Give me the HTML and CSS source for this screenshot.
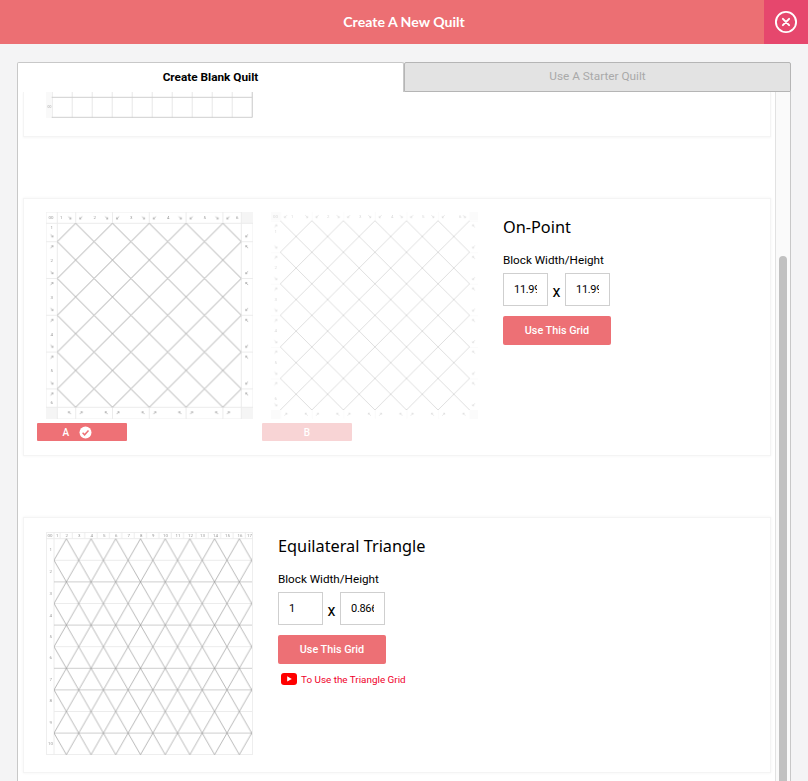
FILE: index.html
```html
<!DOCTYPE html>
<html lang="en">
<head>
<meta charset="utf-8">
<title>Create A New Quilt</title>
<link rel="stylesheet" href="styles.css">
</head>
<body>
<svg class="defs" width="0" height="0" aria-hidden="true">
  <defs>
    <pattern id="a-dia" x="11.3" y="11.3" width="36.8" height="36.8" patternUnits="userSpaceOnUse">
      <path class="ln" d="M18.4 0L0 18.4L18.4 36.8L36.8 18.4Z"/>
    </pattern>
    <pattern id="a-top" x="11.3" y="0" width="36.8" height="11.3" patternUnits="userSpaceOnUse">
      <path class="dv" d="M18.4 0V11.3"/>
      <path class="ar" d="M11.2 4.5l2.4 2.4m-1.5 0h1.5v-1.5M24.9 4.5l-2.4 2.4m1.5 0h-1.5v-1.5"/>
    </pattern>
    <pattern id="a-bot" x="11.3" y="195.3" width="36.8" height="11.7" patternUnits="userSpaceOnUse">
      <path class="dv" d="M18.4 0V11.7"/>
      <path class="ar" d="M13.6 6.9l-2.4-2.4m1.5 0h-1.5v1.5M22.5 6.9l2.4-2.4m-1.5 0h1.5v1.5"/>
    </pattern>
    <pattern id="a-left" x="0" y="11.3" width="11.3" height="36.8" patternUnits="userSpaceOnUse">
      <path class="dv" d="M0 18.4H11.3"/>
      <path class="ar" d="M4.5 11.2l2.4 2.4m-1.5 0h1.5v-1.5M4.5 24.9l2.4-2.4m-1.5 0h1.5v1.5"/>
    </pattern>
    <pattern id="a-right" x="195.3" y="11.3" width="11.7" height="36.8" patternUnits="userSpaceOnUse">
      <path class="dv" d="M0 18.4H11.7"/>
      <path class="ar" d="M6.9 11.2l-2.4 2.4m1.5 0h-1.5v-1.5M6.9 24.9l-2.4-2.4m1.5 0h-1.5v1.5"/>
    </pattern>
    <pattern id="b-dia" x="9.3" y="8.7" width="31.55" height="31.55" patternUnits="userSpaceOnUse">
      <path class="ln" d="M0 0L31.55 31.55M31.55 0L0 31.55"/>
    </pattern>
    <pattern id="b-top" x="9.3" y="0" width="31.55" height="8.7" patternUnits="userSpaceOnUse">
      <path class="dv" d="M0 0V8.7"/>
      <path class="ar" d="M25 3.2l2.4 2.4m-1.5 0h1.5v-1.5M6.6 3.2l-2.4 2.4m1.5 0h-1.5v-1.5"/>
    </pattern>
    <pattern id="b-bot" x="9.3" y="198" width="31.55" height="8.7" patternUnits="userSpaceOnUse">
      <path class="dv" d="M0 0V8.7"/>
      <path class="ar" d="M27.4 5.6l-2.4-2.4m1.5 0h-1.5v1.5M4.2 5.6l2.4-2.4m-1.5 0h1.5v1.5"/>
    </pattern>
    <pattern id="b-left" x="0" y="8.7" width="9.3" height="31.55" patternUnits="userSpaceOnUse">
      <path class="dv" d="M0 0H9.3"/>
      <path class="ar" d="M3.4 25l2.4 2.4m-1.5 0h1.5v-1.5M3.4 6.6l2.4-2.4m-1.5 0h1.5v1.5"/>
    </pattern>
    <pattern id="b-right" x="198.6" y="8.7" width="8.4" height="31.55" patternUnits="userSpaceOnUse">
      <path class="dv" d="M0 0H8.4"/>
      <path class="ar" d="M5.4 25l-2.4 2.4m1.5 0h-1.5v-1.5M5.4 6.6l-2.4-2.4m1.5 0h-1.5v1.5"/>
    </pattern>
    <pattern id="c-tri" x="8" y="6.7" width="24.71" height="43.2" patternUnits="userSpaceOnUse">
      <path class="lt" d="M12.355 0L0 21.6L12.355 43.2L24.71 21.6Z"/>
    </pattern>
    <pattern id="c-top" x="8" y="0" width="12.36" height="6.7" patternUnits="userSpaceOnUse">
      <path class="dv" d="M6 0V6.7"/>
    </pattern>
    <pattern id="d-col" x="5.7" y="0" width="20" height="26" patternUnits="userSpaceOnUse">
      <path class="cl" d="M0 0V26"/>
    </pattern>
  </defs>
</svg>

<header class="header">
  <h1 class="header-title">Create A New Quilt</h1>
  <button class="close" aria-label="Close">
    <svg width="24" height="24" viewBox="0 0 24 24">
      <circle cx="12" cy="12" r="10.1" class="close-ring"/>
      <path class="close-x" d="M8.9 8.9l6.2 6.2M15.1 8.9l-6.2 6.2"/>
    </svg>
  </button>
</header>

<main class="main">
  <div class="tabs">
    <div class="tab tab-active">Create Blank Quilt</div>
    <div class="tab tab-off">Use A Starter Quilt</div>
  </div>
  <div class="panel">
    <div class="list">
      <section class="card card-clipped">
        <svg class="thumb-clip" width="207" height="26" viewBox="0 0 207 26">
          <rect x="0" y="0" width="5.7" height="26" class="cell-bg"/>
          <rect x="5.7" y="0" width="200.6" height="26" fill="url(#d-col)"/>
          <path class="cl" d="M5.7 5.3H206.3M5.7 25.3H206.3M206.3 0V25.3"/>
          <text x="1.6" y="16" class="lab lab-tiny">00</text>
        </svg>
      </section>

      <section class="card">
        <div class="option">
          <svg class="thumb" width="207" height="207" viewBox="0 0 207 207">
            <rect x="0" y="0" width="207" height="207" class="frame"/>
            <rect x="195.3" y="0" width="11.7" height="11.3" class="corner"/>
            <rect x="0" y="195.3" width="11.3" height="11.7" class="corner"/>
            <rect x="195.3" y="195.3" width="11.7" height="11.7" class="corner"/>
            <rect x="11.3" y="0" width="184" height="11.3" fill="url(#a-top)"/>
            <rect x="11.3" y="195.3" width="184" height="11.7" fill="url(#a-bot)"/>
            <rect x="0" y="11.3" width="11.3" height="184" fill="url(#a-left)"/>
            <rect x="195.3" y="11.3" width="11.7" height="184" fill="url(#a-right)"/>
            <path class="dv" d="M11.3 0V207M195.3 0V207M0 11.3H207M0 195.3H207"/>
            <rect x="11.3" y="11.3" width="184" height="184" fill="url(#a-dia)"/>
            <text x="2.5" y="7" class="lab">00</text>
            <text x="14" y="7" class="lab">1</text><text x="47.5" y="7" class="lab">2</text><text x="84" y="7" class="lab">3</text><text x="121" y="7" class="lab">4</text><text x="157.5" y="7" class="lab">5</text><text x="190" y="7" class="lab">6</text>
            <text x="4.5" y="16.5" class="lab">1</text><text x="4.5" y="50" class="lab">2</text><text x="4.5" y="87" class="lab">3</text><text x="4.5" y="124" class="lab">4</text><text x="4.5" y="160" class="lab">5</text><text x="4.5" y="192" class="lab">6</text>
          </svg>
          <div class="pick pick-on">
            <span>A</span>
            <svg width="13" height="13" viewBox="0 0 13 13"><circle cx="6.5" cy="6.5" r="6" fill="#fff"/><path class="tick" d="M3.6 6.8l2 2 3.9-4.2"/></svg>
          </div>
        </div>
        <div class="option">
          <svg class="thumb thumb-faint" width="207" height="207" viewBox="0 0 207 207">
            <rect x="0" y="0" width="9.3" height="8.7" class="corner"/>
            <rect x="198.6" y="0" width="8.4" height="8.7" class="corner"/>
            <rect x="0" y="198" width="9.3" height="9" class="corner"/>
            <rect x="198.6" y="198" width="8.4" height="9" class="corner"/>
            <rect x="9.3" y="0" width="189.3" height="8.7" fill="url(#b-top)"/>
            <rect x="9.3" y="198" width="189.3" height="8.7" fill="url(#b-bot)"/>
            <rect x="0" y="8.7" width="9.3" height="189.3" fill="url(#b-left)"/>
            <rect x="198.6" y="8.7" width="8.4" height="189.3" fill="url(#b-right)"/>
            <rect x="9.3" y="8.7" width="189.3" height="189.3" fill="url(#b-dia)"/>
            <text x="2" y="5.5" class="lab">00</text>
            <text x="20" y="5.5" class="lab">1</text><text x="56" y="5.5" class="lab">2</text><text x="88" y="5.5" class="lab">3</text><text x="120" y="5.5" class="lab">4</text><text x="151" y="5.5" class="lab">5</text><text x="188" y="5.5" class="lab">6</text>
            <text x="3.5" y="21" class="lab">1</text><text x="3.5" y="57" class="lab">2</text><text x="3.5" y="89" class="lab">3</text><text x="3.5" y="120" class="lab">4</text><text x="3.5" y="152" class="lab">5</text><text x="3.5" y="188" class="lab">6</text>
          </svg>
          <div class="pick pick-off"><span>B</span></div>
        </div>
        <div class="form">
          <h2 class="form-title">On-Point</h2>
          <label class="form-label">Block Width/Height</label>
          <div class="dims">
            <input class="dim" value="11.99">
            <span class="dim-x">x</span>
            <input class="dim" value="11.99">
          </div>
          <button class="use">Use This Grid</button>
        </div>
      </section>

      <section class="card card-tri">
        <svg class="thumb thumb-tri" width="207" height="223" viewBox="0 0 207 223">
          <rect x="0.5" y="0.5" width="206" height="222" class="frame"/>
          <rect x="8" y="0" width="198" height="6.7" fill="url(#c-top)"/>
          <path class="dv" d="M8 0V223M0 6.7H207"/>
          <path class="dv" d="M8 28.3H206M8 71.5H206M8 114.7H206M8 179.5H206"/>
          <path class="hl" d="M8 49.9H206M8 93.1H206M8 136.3H206M8 157.9H206M8 201.1H206"/>
          <rect x="8" y="6.7" width="198" height="216" fill="url(#c-tri)"/>
          <text x="1.5" y="5.2" class="lab">00</text>
          <text x="10" y="5" class="lab">1</text><text x="19.5" y="5" class="lab">2</text><text x="32" y="5" class="lab">3</text><text x="44.5" y="5" class="lab">4</text><text x="57" y="5" class="lab">5</text><text x="69" y="5" class="lab">6</text><text x="81.5" y="5" class="lab">7</text><text x="94" y="5" class="lab">8</text><text x="106" y="5" class="lab">9</text><text x="117" y="5" class="lab">10</text><text x="129.5" y="5" class="lab">11</text><text x="142" y="5" class="lab">12</text><text x="154" y="5" class="lab">13</text><text x="167" y="5" class="lab">14</text><text x="179" y="5" class="lab">15</text><text x="191.5" y="5" class="lab">16</text><text x="201" y="5" class="lab">17</text>
          <text x="3.5" y="19" class="lab">1</text><text x="3.5" y="41" class="lab">2</text><text x="3.5" y="63" class="lab">3</text><text x="3.5" y="85" class="lab">4</text><text x="3.5" y="106" class="lab">5</text><text x="3.5" y="127" class="lab">6</text><text x="3.5" y="149" class="lab">7</text><text x="3.5" y="170" class="lab">8</text><text x="3.5" y="192" class="lab">9</text><text x="2" y="213" class="lab">10</text>
        </svg>
        <div class="form form-tri">
          <h2 class="form-title">Equilateral Triangle</h2>
          <label class="form-label">Block Width/Height</label>
          <div class="dims">
            <input class="dim" value="1">
            <span class="dim-x">x</span>
            <input class="dim" value="0.866">
          </div>
          <button class="use">Use This Grid</button>
          <a class="video" href="#">
            <svg width="16" height="12" viewBox="0 0 16 12"><rect width="16" height="12" rx="3" fill="#f00"/><path d="M6.2 3.2v5.4L10.8 6z" fill="#fff"/></svg>
            <span>To Use the Triangle Grid</span>
          </a>
        </div>
      </section>
    </div>
    <div class="track"><div class="track-thumb"></div></div>
  </div>
</main>
</body>
</html>
```
FILE: styles.css
```css
* { box-sizing: border-box; }
html, body { height: 100%; }
body {
  margin: 0;
  background: #f4f4f5;
  font-family: Roboto, "Liberation Sans", sans-serif;
  color: #000;
  overflow: hidden;
  display: flex;
  flex-direction: column;
}
.defs { display: block; flex: none; }

.header {
  flex: none;
  height: 44px;
  background: #ec6f73;
  display: flex;
  align-items: center;
  justify-content: center;
  position: relative;
}
.header-title {
  margin: 0;
  font: 700 14.1px/20px Lato, sans-serif;
  color: #fff;
}
.close {
  position: absolute;
  top: 0;
  right: 0;
  width: 44px;
  height: 44px;
  padding: 0;
  border: 0;
  background: #e6476d;
  display: flex;
  align-items: center;
  justify-content: center;
}
.close-ring { fill: none; stroke: #fff; stroke-width: 1.9; }
.close-x { fill: none; stroke: #fff; stroke-width: 2; stroke-linecap: round; }

.main {
  flex: 1;
  min-height: 0;
  padding: 18px 17px 0;
  display: flex;
  flex-direction: column;
}
.tabs { flex: none; display: flex; height: 30px; }
.tab {
  flex: 1;
  display: flex;
  align-items: center;
  justify-content: center;
  padding-bottom: 2px;
  font-size: 11.8px;
  border-radius: 2px 2px 0 0;
}
.tab-active {
  background: #fff;
  font-weight: 700;
  border: 1px solid #c8c8c8;
  border-bottom: 0;
}
.tab-off {
  background: #e3e3e3;
  color: #a9a9a9;
  border: 1px solid #b5b5b5;
}

.panel {
  flex: 1;
  min-height: 0;
  display: flex;
  background: #fff;
  border-left: 1px solid #c8c8c8;
  border-right: 1px solid #c8c8c8;
  overflow: hidden;
}
.list {
  flex: 1;
  min-width: 0;
  padding: 0 4px 0 5px;
  display: flex;
  flex-direction: column;
  gap: 61.5px;
  overflow: hidden;
}
.card {
  flex: none;
  display: flex;
  background: #fff;
  border: 1px solid #f4f4f4;
  box-shadow: 0 0 3px rgba(0, 0, 0, .05);
  padding: 13px 0 13.5px 13px;
}
.card-clipped {
  height: 44.5px;
  padding: 0 0 0 22px;
  border-top: 0;
  box-shadow: 0 1px 2px rgba(0, 0, 0, .04);
}
.thumb-clip { display: block; filter: blur(.25px); }
.card-tri { height: 256px; padding: 14px 0 0 22px; }

.option { width: 225px; flex: none; }
.thumb { display: block; margin-left: 9px; filter: blur(.25px); }
.thumb-faint { opacity: .38; filter: blur(.35px); }
.card-tri .thumb-tri { margin-left: 0; flex: none; }
.frame { fill: #fff; stroke: #eee; stroke-width: 1; }
.corner { fill: #f5f5f5; }
.cell-bg { fill: #f9f9f9; }
.ln { fill: none; stroke: #8e8e8e; stroke-width: .75; }
.lt { fill: none; stroke: #8a8a8a; stroke-width: .6; }
.cl { fill: none; stroke: #cfcfcf; stroke-width: 1; }
.hl { fill: none; stroke: #c8c8c8; stroke-width: .9; }
.dv { fill: none; stroke: #ececec; stroke-width: 1; }
.ar { fill: none; stroke: #777; stroke-width: .5; }
.lab { font: 4.4px Roboto, sans-serif; fill: #999; }
.lab-tiny { font-size: 3.4px; fill: #aaa; }

.pick {
  width: 90px;
  height: 18px;
  margin-top: 4px;
  border-radius: 1px;
  display: flex;
  align-items: center;
  justify-content: center;
  gap: 9.5px;
  color: #fff;
  font-size: 10px;
  font-weight: 500;
}
.pick-on { background: #ee7176; padding-right: 10px; }
.pick-off { background: #f8d4d5; }
.tick { fill: none; stroke: #ee7176; stroke-width: 1.5; }

.form { padding: 5px 0 0 16px; }
.form-tri { padding: 4px 0 0 25px; }
.form-title {
  margin: 0;
  font: 400 16.3px/20px "Noto Sans", sans-serif;
}
.form-label {
  display: block;
  margin-top: 16px;
  font-size: 11.7px;
  line-height: 14px;
}
.dims { display: flex; align-items: center; margin-top: 6px; }
.dim {
  width: 45px;
  height: 33px;
  padding: 0 10px;
  border: 1px solid #cfcfcf;
  background: #fff;
  color: #000;
  font: 11px Roboto, sans-serif;
  letter-spacing: -.3px;
  outline: 0;
}
.dim-x { width: 17px; text-align: center; font-size: 16px; line-height: 20px; padding-top: 4px; }
.use {
  display: block;
  width: 108px;
  height: 29px;
  margin-top: 10px;
  padding: 0;
  border: 0;
  border-radius: 2px;
  background: #ed7075;
  color: #fff;
  font: 500 10.8px Roboto, sans-serif;
}
.video {
  display: flex;
  align-items: center;
  gap: 4px;
  margin: 9px 0 0 3px;
  color: #f0002a;
  font-size: 9.9px;
  text-decoration: none;
}

.track {
  flex: none;
  width: 15px;
  background: #fafafa;
  border-left: 1px solid #e2e2e2;
  padding: 164px 3px 0;
}
.track-thumb {
  width: 8px;
  height: 700px;
  background: #c1c1c1;
  border-radius: 4px;
}
```
